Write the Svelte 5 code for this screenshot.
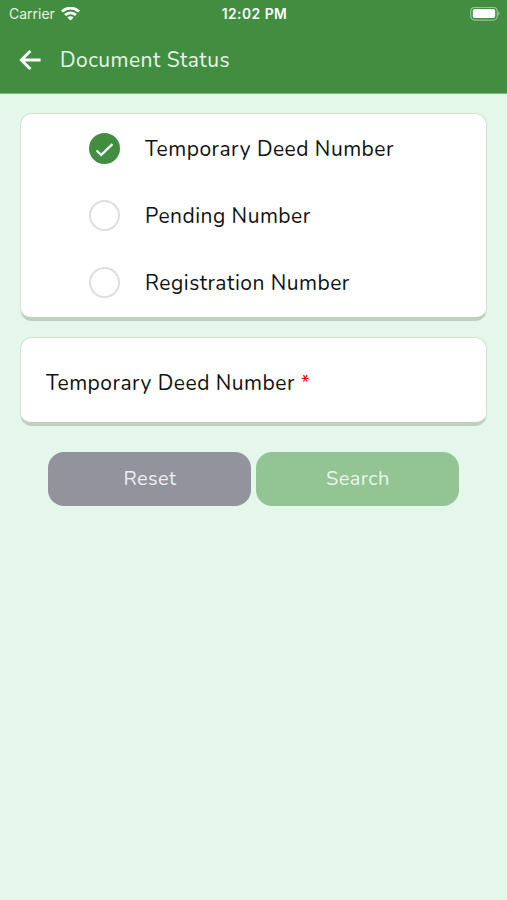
<script>
  const options = [
    { id: 'temporary', label: 'Temporary Deed Number' },
    { id: 'pending', label: 'Pending Number' },
    { id: 'registration', label: 'Registration Number' }
  ];

  let selected = $state('temporary');
  let current = $derived(options.find((option) => option.id === selected));
</script>

<div class="screen">
  <header>
    <div class="status-bar">
      <div class="carrier">
        <span>Carrier</span>
        <svg width="19" height="14" viewBox="0 0 19 14" fill="none" stroke="#fff" stroke-width="2.8">
          <path d="M1 4.6C5.8-.1 13.2-.1 18 4.6" />
          <path d="M4.1 8.1c3-3 7.8-3 10.8 0" />
          <path d="M9.5 13.5 6.4 10.5c1.7-1.6 4.5-1.6 6.2 0z" fill="#fff" stroke="none" />
        </svg>
      </div>
      <span class="time">12:02 PM</span>
      <svg class="battery" width="30" height="14" viewBox="0 0 30 14">
        <rect x=".7" y=".3" width="26.6" height="12.8" rx="4" fill="none" stroke="#fff" stroke-opacity=".45" stroke-width="1.2" />
        <rect x="2.8" y="2.1" width="22.4" height="9" rx="2" fill="#fff" />
        <path d="M28.2 4.4c1.9.8 1.9 3.6 0 4.4z" fill="#fff" fill-opacity=".45" />
      </svg>
    </div>
    <div class="nav-bar">
      <button class="back" aria-label="Back">
        <svg width="22" height="20" viewBox="0 0 22 20" fill="none" stroke="#fff" stroke-width="2.8">
          <path d="M21.6 10H2.5M11.4.9 2.3 10l9.1 9.1" />
        </svg>
      </button>
      <h1>Document Status</h1>
    </div>
  </header>

  <main>
    <div class="card options">
      {#each options as option}
        <button class="option" onclick={() => (selected = option.id)}>
          <span class="radio" class:checked={selected === option.id}>
            {#if selected === option.id}
              <svg width="31" height="31" viewBox="0 0 31 31" fill="none" stroke="#fff" stroke-width="2.3">
                <path d="m7.6 17.5 4.6 4.5L23.4 11.2" />
              </svg>
            {/if}
          </span>
          <span class="label">{option.label}</span>
        </button>
      {/each}
    </div>

    <div class="card field">
      <span class="label">{current.label}</span>
      <span class="required">*</span>
    </div>

    <div class="actions">
      <button class="reset">Reset</button>
      <button class="search">Search</button>
    </div>
  </main>
</div>

<style>
  :global(body) {
    background-color: #e5f6ea;
  }

  .screen {
    min-height: 100vh;
    background-color: #e5f6ea;
    font-family: Nunito, Lato, sans-serif;
    color: #111;
  }

  button {
    border: none;
    padding: 0;
    background: none;
    color: inherit;
    font: inherit;
    cursor: pointer;
  }

  svg {
    display: block;
  }

  header {
    height: 93px;
    border-bottom: 1px solid #7db87e;
    background-color: #428e41;
    color: #fff;
  }

  .status-bar {
    display: grid;
    grid-template-columns: 1fr auto 1fr;
    align-items: center;
    height: 27px;
    padding: 0 7px 0 9px;
    font-family: Inter, sans-serif;
    font-size: 14px;
  }

  .carrier {
    display: flex;
    align-items: center;
    gap: 6px;
    color: #e3f2e3;
  }

  .time {
    font-size: 13.8px;
    font-weight: 600;
    letter-spacing: 0.5px;
  }

  .battery {
    justify-self: end;
  }

  .nav-bar {
    display: flex;
    align-items: center;
    height: 65px;
    padding-left: 19px;
    gap: 19px;
  }

  h1 {
    margin: 0;
    font-size: 21px;
    font-weight: 400;
    letter-spacing: 0.45px;
    color: #e8f5e8;
  }

  main {
    padding: 19px 19.6px 0 20.4px;
  }

  .card {
    box-sizing: border-box;
    border: 1px solid #cfe3cf;
    border-bottom: 4px solid #bfcfc0;
    border-radius: 12px;
    background-color: #fff;
  }

  .options {
    display: flex;
    flex-direction: column;
    height: 208px;
    padding: 1px 0 0 67.4px;
  }

  .option {
    display: flex;
    align-items: center;
    height: 67.2px;
    gap: 25.3px;
    text-align: left;
  }

  .radio {
    box-sizing: border-box;
    width: 31px;
    height: 31px;
    border: 2px solid #dedede;
    border-radius: 50%;
  }

  .radio.checked {
    border: none;
    background-color: #428e41;
  }

  .label {
    font-size: 21px;
    letter-spacing: 0.48px;
  }

  .field {
    display: flex;
    align-items: center;
    gap: 6px;
    height: 89px;
    margin-top: 16px;
    padding: 5px 25px 0 24.6px;
  }

  .required {
    font-size: 19px;
    font-weight: 500;
    color: #f00;
  }

  .actions {
    display: flex;
    gap: 5px;
    margin: 26px 28px 0;
  }

  .actions button {
    flex: 1;
    height: 54px;
    padding-bottom: 1px;
    border-radius: 16px;
    font-size: 20px;
    letter-spacing: 0.4px;
  }

  .reset {
    background-color: #92939c;
    color: #eeeef1;
  }

  .search {
    background-color: #92c494;
    color: #e9f6e9;
  }
</style>
